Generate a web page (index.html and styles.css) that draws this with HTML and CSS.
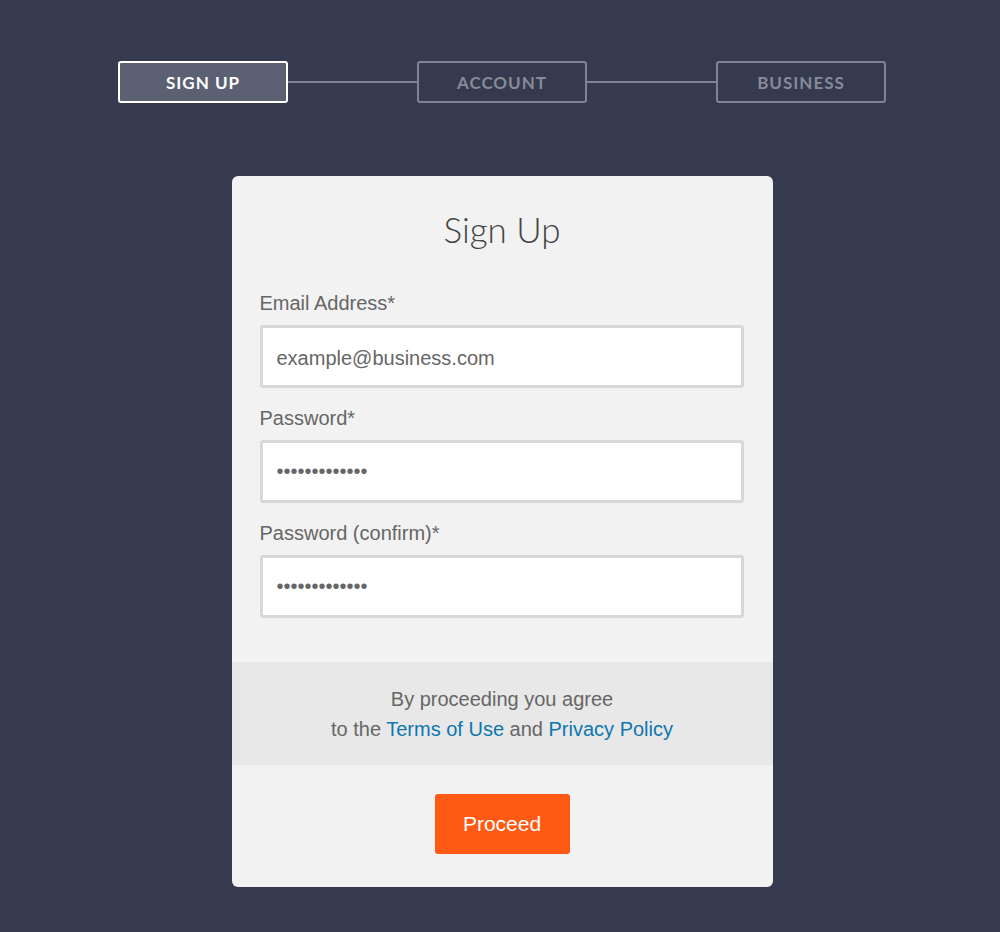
FILE: index.html
```html
<!DOCTYPE html>
<html>
<head>
  <title>Sign Up</title>
  <link rel="stylesheet" href="styles.css">
</head>
<body>

<div class="steps">
  <div class="step active">SIGN UP</div>
  <div class="step-line"></div>
  <div class="step">ACCOUNT</div>
  <div class="step-line"></div>
  <div class="step">BUSINESS</div>
</div>

<div class="signup-card">
  <h1>Sign Up</h1>

  <form id="signup-form">
    <label for="email">Email Address*</label>
    <input type="text" id="email" placeholder="example@business.com">

    <label for="password">Password*</label>
    <input type="password" id="password" value="passwordvalue">

    <label for="password2">Password (confirm)*</label>
    <input type="password" id="password2" value="passwordvalue">
  </form>

  <div class="terms">
    By proceeding you agree<br>
    to the <a href="#">Terms of Use</a> and <a href="#">Privacy Policy</a>
  </div>

  <div class="actions">
    <button type="button" class="proceed">Proceed</button>
  </div>
</div>

</body>
</html>
```

FILE: styles.css
```css
body {
  font-family: "Liberation Sans", Arial, sans-serif;
  background-color: #353a4f;
  margin: 0;
  padding: 61px 0 46px 4px;
}
.steps {
  display: flex;
  align-items: center;
  width: 768px;
  margin: 0 auto;
}
.step {
  box-sizing: border-box;
  width: 170px;
  height: 42px;
  border: 2px solid #7f8393;
  border-radius: 3px;
  color: #868a99;
  font-family: Lato, "Open Sans", sans-serif;
  font-weight: bold;
  font-size: 17px;
  letter-spacing: 1px;
  display: flex;
  align-items: center;
  justify-content: center;
}
.step.active {
  border-color: #ffffff;
  background-color: #5b6073;
  color: #ffffff;
}
.step-line {
  flex: 1;
  height: 2px;
  background-color: #7f8393;
}
.signup-card {
  width: 541px;
  margin: 73px auto 0;
  background: #f2f2f2;
  border-radius: 6px;
  overflow: hidden;
}
h1 {
  margin: 0;
  padding: 31px 0 41px;
  text-align: center;
  font-family: Lato, "Open Sans", sans-serif;
  font-weight: 300;
  font-size: 35px;
  line-height: 44px;
  color: #444;
}
#signup-form {
  display: flex;
  flex-direction: column;
  padding: 0 29px 44px 28px;
}
label {
  font-size: 20px;
  line-height: 22px;
  color: #666;
  margin-bottom: 11px;
}
input[type="text"], input[type="password"] {
  box-sizing: border-box;
  height: 63px;
  padding: 3px 14px 0;
  margin-bottom: 19px;
  border: 3px solid #d8d8d8;
  border-radius: 3px;
  background: #fff;
  font-family: "Liberation Sans", Arial, sans-serif;
  font-size: 20px;
  color: #666;
}
input[type="password"] {
  padding-top: 0;
}
input:last-child {
  margin-bottom: 0;
}
input::placeholder {
  color: #666;
}
.terms {
  background: #e8e8e8;
  padding: 22px 0 21px;
  text-align: center;
  font-size: 20px;
  line-height: 30px;
  color: #666;
}
.terms a {
  color: #0c77b0;
  text-decoration: none;
}
.actions {
  display: flex;
  justify-content: center;
  padding: 29px 0 33px;
}
.proceed {
  width: 135px;
  height: 60px;
  border: none;
  border-radius: 3px;
  background-color: #ff5a14;
  color: #fff;
  font-family: "Liberation Sans", Arial, sans-serif;
  font-size: 21px;
  cursor: pointer;
}
```
